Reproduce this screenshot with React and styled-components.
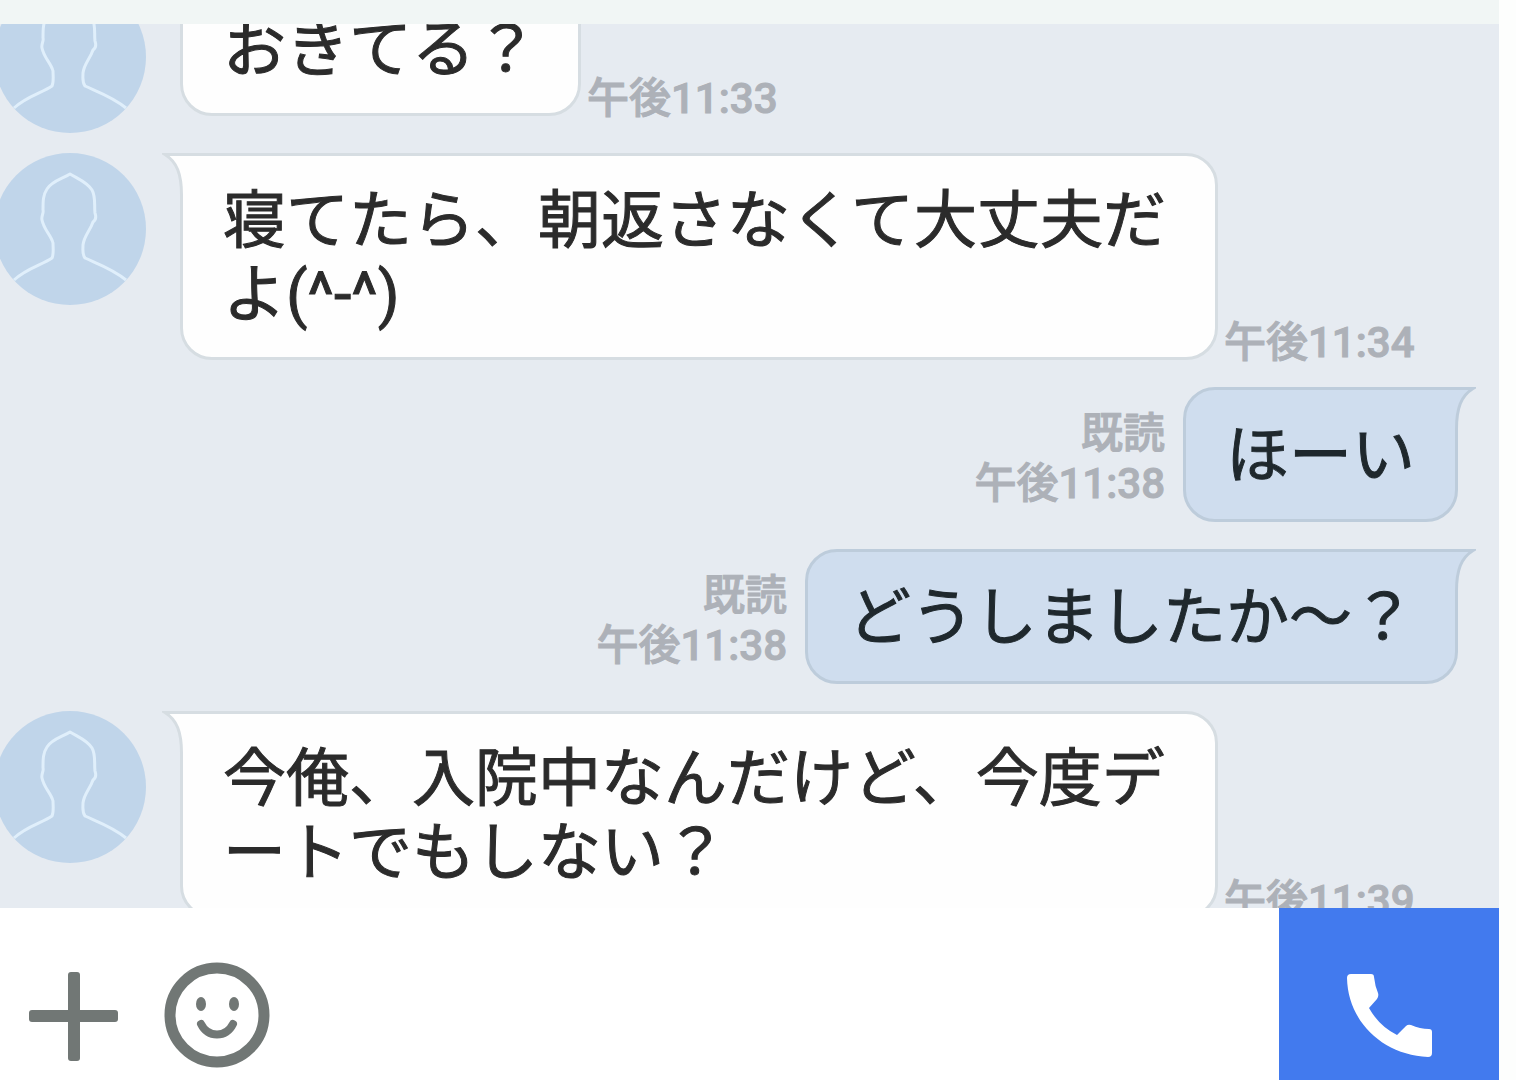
import { useState } from 'react';
import styled, { createGlobalStyle } from 'styled-components';

const GlobalStyle = createGlobalStyle`
  * {
    box-sizing: border-box;
  }

  body {
    margin: 0;
    background: #fdfefd;
    font-family: Roboto, 'Noto Sans CJK JP', sans-serif;
  }
`;

const Page = styled.div`
  display: flex;
  flex-direction: column;
  height: 100vh;
  padding-right: 17px;
  overflow: hidden;
`;

const Header = styled.header`
  flex: none;
  height: 24px;
  background: #f1f6f5;
`;

const Chat = styled.main`
  flex: 1;
  min-height: 0;
  overflow: hidden;
  background: #e6ebf1;
`;

// 途中までスクロールした状態
const MessageList = styled.ul`
  display: flex;
  flex-direction: column;
  gap: 27px;
  margin: -43px 0 0;
  padding: 0 41px 0 0;
  list-style: none;
`;

const Row = styled.li`
  display: flex;
  justify-content: ${(props) => (props.$mine ? 'flex-end' : 'flex-start')};
  align-items: flex-start;
`;

const Content = styled.div`
  display: flex;
  align-items: flex-end;
`;

const AvatarImage = styled.svg`
  flex: none;
  width: 152px;
  height: 152px;
  margin: 0 34px -7px -6px;
`;

const BubbleBox = styled.div`
  position: relative;
  display: flex;
  align-items: center;
  min-height: 135px;
  max-width: 1038px;
  padding: 28px 40px 25px;
  border: 3px solid ${(props) => (props.$mine ? '#bdccdb' : '#d6dde2')};
  border-radius: ${(props) => (props.$mine ? '32px 0 32px 32px' : '0 32px 32px 32px')};
  background: ${(props) => (props.$mine ? '#cfddee' : '#fefefe')};
`;

const Text = styled.p`
  margin: 0;
  color: ${(props) => (props.$mine ? '#1f282d' : '#2b2b2b')};
  font-size: 63px;
  line-height: 74px;
  line-break: anywhere;
  -webkit-text-stroke: 1px currentColor;
`;

const TailShape = styled.svg`
  position: absolute;
  top: -3px;
  ${(props) => (props.$mine ? 'right: -21px;' : 'left: -21px;')}
  width: 24px;
  height: 42px;
  transform: ${(props) => (props.$mine ? 'scaleX(-1)' : 'none')};
`;

const Meta = styled.div`
  display: flex;
  flex-direction: column;
  align-items: ${(props) => (props.$mine ? 'flex-end' : 'flex-start')};
  margin: ${(props) => (props.$mine ? '0 18px 13px 0' : '0 0 -8px 6px')};
  color: #adb1b8;
  font-size: 42px;
  font-weight: 500;
  line-height: 50px;
  white-space: nowrap;
  -webkit-text-stroke: 1px currentColor;
`;

const Footer = styled.form`
  display: flex;
  flex: none;
  height: 172px;
  background: #fff;
`;

const IconButton = styled.button`
  display: flex;
  flex: none;
  justify-content: center;
  width: ${(props) => props.$width};
  padding: 52px 0 0;
  border: 0;
  background: none;
  color: #717775;
`;

const CallButton = styled(IconButton)`
  padding-top: 50px;
  background: #427aee;
  color: #fff;
`;

const MessageInput = styled.input`
  flex: 1;
  min-width: 0;
  border: 0;
  outline: 0;
  background: transparent;
  font: inherit;
  font-size: 42px;
`;

const messages = [
  { id: 1, text: 'おきてる？', time: '午後11:33' },
  { id: 2, text: '寝てたら、朝返さなくて大丈夫だよ(^-^)', time: '午後11:34' },
  { id: 3, mine: true, text: 'ほーい', time: '午後11:38' },
  { id: 4, mine: true, text: 'どうしましたか〜？', time: '午後11:38' },
  { id: 5, text: '今俺、入院中なんだけど、今度デートでもしない？', time: '午後11:39' },
];

const Avatar = () => (
  <AvatarImage viewBox="0 0 152 152" aria-hidden="true">
    <circle cx="76" cy="76" r="76" fill="#c0d5ea" />
    <path
      d="M20 127C33 115 48 112 58 105C60 101 59 95 59 90C57 82 50 77 48 67C47 63 50 60 49 57C49 48 49 42 53 36C58 28 68 26 76 21C84 26 93 29 98 37C102 44 100 52 101 60C102 63 102 67 99 69C96 78 90 83 89 92C89 97 88 101 91 105C104 111 119 116 132 127"
      fill="none"
      stroke="#e0effb"
      strokeWidth="3"
      strokeLinejoin="round"
    />
  </AvatarImage>
);

const Tail = ({ mine }) => (
  <TailShape $mine={mine} viewBox="0 0 24 42" aria-hidden="true">
    <path d="M3 2H24V42H19.5C19.5 21 15 9 3 2Z" fill={mine ? '#cfddee' : '#fefefe'} />
    <path
      d="M24 1.5H3C15 9 19.5 21 19.5 42"
      fill="none"
      stroke={mine ? '#bdccdb' : '#d6dde2'}
      strokeWidth="3"
    />
  </TailShape>
);

const Message = ({ mine, text, time }) => {
  const bubble = (
    <BubbleBox $mine={mine}>
      <Tail mine={mine} />
      <Text $mine={mine}>{text}</Text>
    </BubbleBox>
  );
  const meta = (
    <Meta $mine={mine}>
      {mine && <span>既読</span>}
      <time>{time}</time>
    </Meta>
  );

  if (mine)
    return (
      <Row $mine>
        <Content>
          {meta}
          {bubble}
        </Content>
      </Row>
    );

  return (
    <Row>
      <Avatar />
      <Content>
        {bubble}
        {meta}
      </Content>
    </Row>
  );
};

const App = () => {
  const [draft, setDraft] = useState('');

  return (
    <>
      <GlobalStyle />
      <Page>
        <Header />
        <Chat>
          <MessageList>
            {messages.map((message) => (
              <Message key={message.id} {...message} />
            ))}
          </MessageList>
        </Chat>
        <Footer onSubmit={(e) => e.preventDefault()}>
          <IconButton type="button" aria-label="追加" $width="147px">
            <svg width="112" height="112" viewBox="0 0 112 112" aria-hidden="true">
              <rect x="11" y="50" width="89" height="12" rx="3" fill="currentColor" />
              <rect x="50" y="12" width="12" height="89" rx="3" fill="currentColor" />
            </svg>
          </IconButton>
          <IconButton type="button" aria-label="スタンプ" $width="141px">
            <svg width="112" height="112" viewBox="0 0 112 112" fill="none" aria-hidden="true">
              <circle cx="55" cy="55" r="47" stroke="currentColor" strokeWidth="11" />
              <ellipse cx="39" cy="44" rx="5" ry="7" fill="currentColor" />
              <ellipse cx="72" cy="44" rx="5" ry="7" fill="currentColor" />
              <path
                d="M39 64C46 78 64 78 71 64"
                stroke="currentColor"
                strokeWidth="8"
                strokeLinecap="round"
              />
            </svg>
          </IconButton>
          <MessageInput
            type="text"
            aria-label="メッセージ"
            value={draft}
            onChange={(e) => setDraft(e.target.value)}
          />
          <CallButton type="button" aria-label="通話" $width="220px">
            <svg width="112" height="112" viewBox="0 0 112 112" aria-hidden="true">
              <path
                d="M18 16H38Q41 16 41 19Q42 28 45 35Q46 38 44 41L36 50Q46 68 64 77L73 68Q75 66 78 67Q87 71 96 71Q99 71 99 74V95Q99 99 95 99C50 97 15 64 14 20Q14 16 18 16Z"
                fill="currentColor"
              />
            </svg>
          </CallButton>
        </Footer>
      </Page>
    </>
  );
};

export default App;
